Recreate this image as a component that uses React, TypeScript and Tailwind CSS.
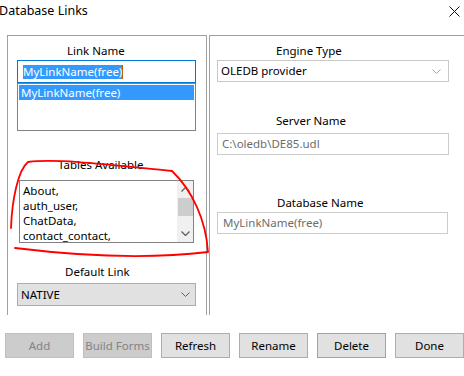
import React from "react";

const font = { fontFamily: '"Segoe UI", "Noto Sans", sans-serif' };

function Chevron({ color }: { color: string }) {
  return (
    <svg width="9" height="5" viewBox="0 0 9 5" fill="none">
      <path d="M0.5 0.5 L4.5 4.5 L8.5 0.5" stroke={color} strokeWidth="1" />
    </svg>
  );
}

function Button({ label, disabled, focus }: { label: string; disabled?: boolean; focus?: boolean }) {
  return (
    <div
      className={
        "w-[69px] h-[25px] flex items-center justify-center whitespace-nowrap text-[11.5px] border " +
        (disabled
          ? "bg-[#cccccc] border-[#bfbfbf] text-[#838383]"
          : focus
          ? "bg-[#e1e1e1] border-[#8fa6bb] text-black"
          : "bg-[#e1e1e1] border-[#adadad] text-black")
      }
    >
      {label}
    </div>
  );
}

export default function App() {
  const tables = ["About,", "auth_user,", "ChatData,", "contact_contact,"];

  return (
    <div className="w-[464px] h-[376px] bg-white relative overflow-hidden text-black text-[11.5px]" style={font}>
      {/* title bar */}
      <div className="h-[35px] flex justify-between">
        <span className="text-[12.5px] leading-[16px] mt-[3px] -ml-[1px]">Database Links</span>
        <svg width="11" height="11" viewBox="0 0 11 11" className="mt-[6px] mr-[4px]">
          <path d="M0.5 0.5 L10.5 10.5 M10.5 0.5 L0.5 10.5" stroke="#111" strokeWidth="1" />
        </svg>
      </div>

      {/* panels */}
      <div className="flex h-[280px]">
        <div className="ml-[7px] w-[200px] border-l border-t border-r border-[#a0a0a0] flex flex-col">
          <div className="leading-[16px] mt-[7px] ml-[59px]">Link Name</div>
          <div className="ml-[9px] mt-[1px] w-[179px] h-[23px] border border-[#0078d7] flex items-center pl-[5px]">
            <span className="bg-[#3399ff] text-white leading-[14px]">MyLinkName(free)</span>
            <span className="w-[1px] h-[14px] bg-[#c06000]" />
          </div>
          <div className="ml-[9px] w-[179px] h-[48px] border border-[#828282] p-[1px]">
            <div className="bg-[#3399ff] text-white leading-[15px] pl-[2px] h-[15px]">MyLinkName(free)</div>
          </div>

          <div className="leading-[16px] mt-[26px] ml-[50px]">Tables Available</div>
          <div className="ml-[11px] mt-[7px] w-[175px] h-[63px] border border-[#828282] flex">
            <div className="flex-1 pl-[3px] pt-[2px]">
              {tables.map((t) => (
                <div key={t} className="leading-[15px] h-[15px]">
                  {t}
                </div>
              ))}
            </div>
            <div className="w-[16px] bg-[#f0f0f0] flex flex-col items-center">
              <div className="h-[17px] flex items-center justify-center">
                <svg width="9" height="5" viewBox="0 0 9 5" fill="none">
                  <path d="M0.5 4.5 L4.5 0.5 L8.5 4.5" stroke="#606060" strokeWidth="1.3" />
                </svg>
              </div>
              <div className="w-[15px] h-[18px] bg-[#cdcdcd]" />
              <div className="flex-1" />
              <div className="h-[17px] flex items-center justify-center">
                <svg width="9" height="5" viewBox="0 0 9 5" fill="none">
                  <path d="M0.5 0.5 L4.5 4.5 L8.5 0.5" stroke="#606060" strokeWidth="1.3" />
                </svg>
              </div>
            </div>
          </div>

          <div className="leading-[16px] mt-[21px] ml-[57px]">Default Link</div>
          <div className="ml-[9px] mt-[3px] w-[179px] h-[23px] border border-[#adadad] bg-[#e1e1e1] flex items-center justify-between pl-[3px] pr-[5px]">
            <span>NATIVE</span>
            <Chevron color="#606060" />
          </div>
        </div>

        <div className="ml-[2px] flex-1 border-l border-t border-[#a0a0a0] flex flex-col">
          <div className="leading-[16px] mt-[7px] ml-[66px]">Engine Type</div>
          <div className="ml-[7px] mt-[1px] w-[232px] h-[22px] border border-[#c8c8c8] flex items-center justify-between pl-[3px] pr-[7px]">
            <span>OLEDB provider</span>
            <Chevron color="#a8a8a8" />
          </div>

          <div className="leading-[16px] mt-[31px] ml-[66px]">Server Name</div>
          <div className="ml-[7px] mt-[4px] w-[232px] h-[22px] border border-[#cccccc] flex items-center pl-[4px]">
            <span className="text-[#6d6d6d]">C:\oledb\DE85.udl</span>
          </div>

          <div className="leading-[16px] mt-[40px] ml-[67px]">Database Name</div>
          <div className="ml-[7px] mt-[1px] w-[231px] h-[22px] border border-[#cccccc] flex items-center pl-[5px]">
            <span className="text-[#6d6d6d]">MyLinkName(free)</span>
          </div>
        </div>
      </div>

      {/* buttons */}
      <div className="flex gap-[9px] pl-[5px] mt-[18px]">
        <Button label="Add" disabled />
        <Button label="Build Forms" disabled />
        <Button label="Refresh" />
        <Button label="Rename" />
        <Button label="Delete" focus />
        <Button label="Done" />
      </div>

      {/* hand-drawn annotation */}
      <svg className="absolute left-0 top-0 pointer-events-none" width="464" height="376" viewBox="0 0 464 376" fill="none">
        <path
          d="M11 228 C 12 200, 18 170, 28 162 C 60 158, 120 166, 172 171 C 192 190, 206 220, 208 252 C 150 259, 80 256, 15 248"
          stroke="#ff0000"
          strokeWidth="1.8"
          strokeLinecap="round"
        />
      </svg>
    </div>
  );
}
